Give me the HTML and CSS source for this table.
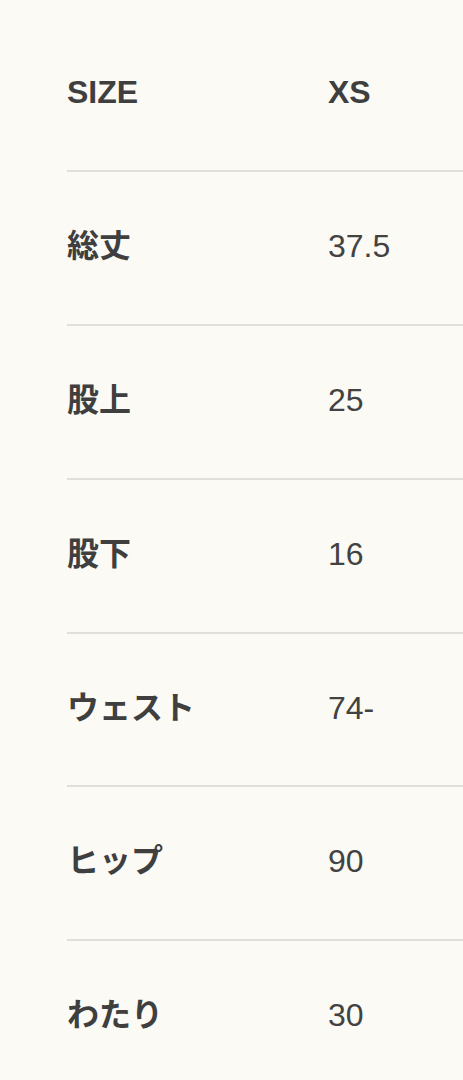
FILE: index.html
```html
<!DOCTYPE html>
<html lang="ja">
<head>
<meta charset="utf-8">
<link rel="stylesheet" href="styles.css">
</head>
<body>
<div class="size-table">
  <div class="row"><div class="label">SIZE</div><div class="value head">XS</div></div>
  <div class="row"><div class="label">総丈</div><div class="value">37.5</div></div>
  <div class="row"><div class="label">股上</div><div class="value">25</div></div>
  <div class="row"><div class="label">股下</div><div class="value">16</div></div>
  <div class="row"><div class="label">ウェスト</div><div class="value">74-</div></div>
  <div class="row"><div class="label">ヒップ</div><div class="value">90</div></div>
  <div class="row"><div class="label">わたり</div><div class="value">30</div></div>
</div>
</body>
</html>
```
FILE: styles.css
```css
html, body {
  margin: 0;
  padding: 0;
  background: #fbfaf5;
  overflow: hidden;
}
.size-table {
  padding-top: 18px;
  margin-left: 67px;
  font-family: "Liberation Sans", Arial, "Noto Sans CJK JP", sans-serif;
  font-size: 32px;
  color: #3f3f3f;
}
.row {
  box-sizing: border-box;
  display: grid;
  grid-template-columns: 261px 1fr;
  align-items: center;
  height: 153.9px;
  padding-bottom: 4px;
  border-bottom: 2px solid #e0dfdb;
  line-height: 1;
}
.label {
  font-weight: 700;
}
.value {
  font-weight: 400;
  color: #424242;
}
.value.head {
  font-weight: 700;
  color: #3f3f3f;
}
```
